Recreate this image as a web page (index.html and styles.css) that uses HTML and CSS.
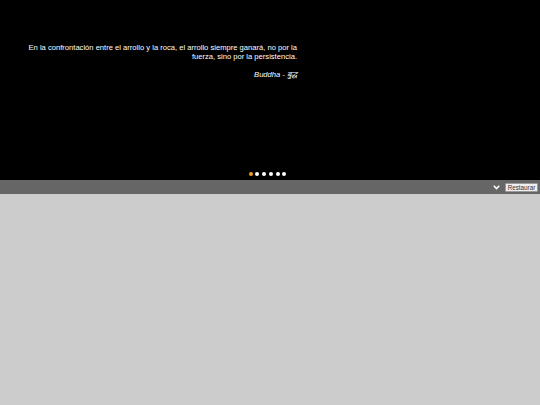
FILE: index.html
```html
<!DOCTYPE html>
<html lang="es">
<head>
  <meta charset="UTF-8" />
  <title>Citas</title>
  <link rel="stylesheet" href="styles.css">
</head>
<body>
  <div class="stage">
    <div class="quote">
      <p class="text">En la confrontación entre el arrollo y la roca, el arrollo siempre ganará, no por la fuerza, sino por la persistencia.</p>
      <p class="author">Buddha - बुद्ध</p>
    </div>
    <div class="dots">
      <span class="dot active"></span>
      <span class="dot"></span>
      <span class="dot"></span>
      <span class="dot"></span>
      <span class="dot"></span>
      <span class="dot"></span>
    </div>
  </div>
  <div class="bar">
    <svg class="chev" width="7" height="5" viewBox="0 0 7 5"><path d="M0.8 0.8 L3.5 3.6 L6.2 0.8" fill="none" stroke="#fff" stroke-width="1.5"/></svg>
    <button class="restore">Restaurar</button>
  </div>
</body>
</html>
```

FILE: styles.css
```css
* { box-sizing: border-box; }
html, body { margin: 0; height: 100%; }
body { background: #cccccc; font-family: "Liberation Sans", Arial, sans-serif; }
.stage { background: #000; height: 180px; display: flex; flex-direction: column; justify-content: space-between; }
.quote { width: 270px; margin-left: 27px; padding-top: 43px; color: #fff; text-align: right; font-size: 7.6px; line-height: 9px; }
.quote p { margin: 0; }
.author { font-style: italic; margin-top: 9px !important; }
.dots { display: flex; justify-content: center; gap: 2.7px; margin-bottom: 4px; padding-right: 5px; }
.dot { width: 4px; height: 4px; border-radius: 50%; background: #fff; }
.dot.active { background: #f0a020; }
.bar { background: #666; height: 14px; display: flex; align-items: center; justify-content: flex-end; padding-right: 2px; gap: 5px; }
.chev { margin-top: 1px; }
.restore { font-family: "Liberation Sans", Arial, sans-serif; font-size: 6.3px; height: 9px; width: 33px; padding: 0; line-height: 8px; background: #eee; color: #333; border: 1px solid #999; border-radius: 1px; }
```
